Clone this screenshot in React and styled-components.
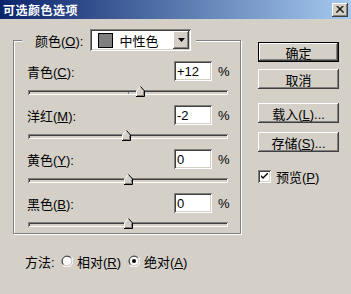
import React from 'react';
import styled, { createGlobalStyle, css } from 'styled-components';

const face = '#d4d0c8';
const shadow = '#808080';
const dark = '#404040';

const sunken = css`
  box-shadow: inset 1px 1px ${shadow}, inset -1px -1px #fff, inset 2px 2px ${dark},
    inset -2px -2px ${face};
`;

const raised = css`
  box-shadow: inset -1px -1px ${dark}, inset 1px 1px #fff, inset -2px -2px ${shadow},
    inset 2px 2px ${face};
`;

const GlobalStyle = createGlobalStyle`
  html, body {
    margin: 0;
    padding: 0;
    background: ${face};
  }
`;

const Window = styled.div`
  width: 351px;
  height: 294px;
  background: ${face};
  font-family: 'Liberation Sans', 'Noto Sans CJK SC', sans-serif;
  font-size: 12px;
  color: #000;
  overflow: hidden;
`;

const TitleBar = styled.div`
  height: 19px;
  display: flex;
  align-items: center;
  justify-content: space-between;
  padding: 0 3px 0 3px;
  background: linear-gradient(to right, #0a246a, #a6caf0);
`;

const Title = styled.span`
  color: #fff;
  font-weight: bold;
  font-size: 12px;
  letter-spacing: 0.5px;
`;

const CloseButton = styled.div`
  width: 16px;
  height: 14px;
  background: ${face};
  display: flex;
  align-items: center;
  justify-content: center;
  ${raised};
`;

const Body = styled.div`
  display: flex;
`;

const LeftColumn = styled.div`
  margin-left: 13px;
  width: 229px;
  display: flex;
  flex-direction: column;
`;

const Group = styled.fieldset`
  margin: 10px 0 0 0;
  width: 228px;
  box-sizing: border-box;
  padding: 10px 12px 4px 13px;
  border: 1px solid ${shadow};
  box-shadow: inset 1px 1px #fff, 1px 1px #fff;
`;

const Legend = styled.legend`
  display: flex;
  align-items: center;
  margin-left: -5px;
  padding: 0 5px 0 13px;
  height: 22px;
  background: ${face};
  gap: 7px;
`;

const Text = styled.span`
  font-size: 13px;
  white-space: nowrap;
`;

const Combo = styled.div`
  width: 101px;
  height: 22px;
  box-sizing: border-box;
  background: #fff;
  display: flex;
  align-items: center;
  padding: 2px 2px 2px 8px;
  ${sunken};
`;

const Swatch = styled.div`
  width: 15px;
  height: 15px;
  box-sizing: border-box;
  background: ${({ color }) => color};
  border: 1px solid #000;
`;

const ComboText = styled.span`
  flex: 1;
  margin-left: 6px;
  font-size: 13px;
`;

const ArrowButton = styled.div`
  width: 16px;
  height: 18px;
  background: ${face};
  display: flex;
  align-items: center;
  justify-content: center;
  ${raised};
`;

const Row = styled.div`
  display: flex;
  flex-direction: column;
  margin-bottom: 8px;
  &:last-child {
    margin-bottom: 0;
  }
`;

const FieldLine = styled.div`
  display: flex;
  align-items: center;
  height: 20px;
`;

const Label = styled.span`
  flex: 1;
  font-size: 13px;
`;

const NumberBox = styled.div`
  width: 38px;
  height: 20px;
  box-sizing: border-box;
  background: #fff;
  padding: 3px 3px 0 3px;
  font-size: 13px;
  line-height: 15px;
  ${sunken};
`;

const Percent = styled.span`
  margin-left: 6px;
  width: 10px;
  font-size: 13px;
`;

const SliderArea = styled.div`
  position: relative;
  margin: 5px 0 0 1px;
  width: 200px;
  height: 11px;
`;

const Track = styled.div`
  position: relative;
  top: 4px;
  height: 5px;
  background: ${face};
  ${sunken};
`;

const CenterMark = styled.div`
  position: absolute;
  left: 100px;
  top: 2px;
  width: 1px;
  height: 2px;
  background: ${shadow};
`;

const Thumb = styled.svg`
  position: absolute;
  top: 0;
  margin-left: -4px;
`;

const MethodLine = styled.div`
  display: flex;
  align-items: center;
  height: 16px;
  margin: 19px 0 0 12px;
`;

const MethodLabel = styled.span`
  width: 36px;
  font-size: 13px;
`;

const Option = styled.label`
  display: flex;
  align-items: center;
  gap: 4px;
  width: ${({ w }) => w}px;
`;

const RightColumn = styled.div`
  margin-left: 16px;
  padding-top: 23px;
  width: 81px;
  display: flex;
  flex-direction: column;
`;

const Button = styled.div`
  height: 20px;
  box-sizing: border-box;
  display: flex;
  align-items: center;
  justify-content: center;
  background: ${face};
  margin-top: ${({ gap }) => gap || 0}px;
  ${({ primary }) =>
    primary
      ? css`
          border: 1px solid #000;
          box-shadow: inset -1px -1px ${dark}, inset 1px 1px #fff, inset -2px -2px ${shadow};
        `
      : raised};
`;

const CheckLine = styled.label`
  display: flex;
  align-items: center;
  gap: 5px;
  margin-top: 15px;
`;

const CheckBox = styled.div`
  width: 13px;
  height: 13px;
  box-sizing: border-box;
  background: #fff;
  display: flex;
  align-items: center;
  justify-content: center;
  ${sunken};
`;

const rows = [
  { label: '青色', key: 'C', value: 12, text: '+12' },
  { label: '洋红', key: 'M', value: -2, text: '-2' },
  { label: '黄色', key: 'Y', value: 0, text: '0' },
  { label: '黑色', key: 'B', value: 0, text: '0' },
];

const Radio = ({ checked }) => (
  <svg width="12" height="12" viewBox="0 0 12 12">
    <path d="M10.5 2.5 A6 6 0 0 0 1.5 9.5" stroke={shadow} fill="none" />
    <path d="M9.5 2.5 A4.8 4.8 0 0 0 2.5 9.5" stroke={dark} fill="none" />
    <circle cx="6" cy="6" r="4" fill="#fff" />
    <path d="M1.5 10 A6 6 0 0 0 10.5 1.8" stroke="#fff" fill="none" />
    {checked && <circle cx="6" cy="6" r="2" fill="#000" />}
  </svg>
);

const SliderThumb = ({ value }) => (
  <Thumb width="9" height="11" viewBox="0 0 9 11" style={{ left: 100 + value }}>
    <polygon points="0.5,5 4.5,0.5 8.5,5 8.5,10.5 0.5,10.5" fill={face} />
    <polyline points="0.5,10 0.5,5 4.5,0.5" stroke="#fff" fill="none" />
    <polyline points="4.5,0.5 8.5,5 8.5,10.5 0,10.5" stroke="#000" fill="none" />
    <polyline points="7.5,5.5 7.5,9.5 1,9.5" stroke={shadow} fill="none" />
  </Thumb>
);

export default function App() {
  return (
    <Window>
      <GlobalStyle />
      <TitleBar>
        <Title>可选颜色选项</Title>
        <CloseButton>
          <svg width="8" height="7" viewBox="0 0 8 7">
            <path d="M0.5 0 L7.5 7 M1.5 0 L8 6.5 M7.5 0 L0.5 7 M6.5 0 L0 6.5" stroke="#000" strokeWidth="1" />
          </svg>
        </CloseButton>
      </TitleBar>
      <Body>
        <LeftColumn>
          <Group>
            <Legend>
              <Text>
                颜色(<u>O</u>):
              </Text>
              <Combo>
                <Swatch color="#7f7f7f" />
                <ComboText>中性色</ComboText>
                <ArrowButton>
                  <svg width="7" height="4" viewBox="0 0 7 4">
                    <polygon points="0,0 7,0 3.5,4" fill="#000" />
                  </svg>
                </ArrowButton>
              </Combo>
            </Legend>
            {rows.map((r) => (
              <Row key={r.key}>
                <FieldLine>
                  <Label>
                    {r.label}(<u>{r.key}</u>):
                  </Label>
                  <NumberBox>{r.text}</NumberBox>
                  <Percent>%</Percent>
                </FieldLine>
                <SliderArea>
                  <Track>
                    <CenterMark />
                  </Track>
                  <SliderThumb value={r.value} />
                </SliderArea>
              </Row>
            ))}
          </Group>
          <MethodLine>
            <MethodLabel>方法:</MethodLabel>
            <Option w={67}>
              <Radio />
              <Text>
                相对(<u>R</u>)
              </Text>
            </Option>
            <Option w={80}>
              <Radio checked />
              <Text>
                绝对(<u>A</u>)
              </Text>
            </Option>
          </MethodLine>
        </LeftColumn>
        <RightColumn>
          <Button primary>
            <Text>确定</Text>
          </Button>
          <Button gap={7}>
            <Text>取消</Text>
          </Button>
          <Button gap={14}>
            <Text>
              载入(<u>L</u>)...
            </Text>
          </Button>
          <Button gap={9}>
            <Text>
              存储(<u>S</u>)...
            </Text>
          </Button>
          <CheckLine>
            <CheckBox>
              <svg width="7" height="7" viewBox="0 0 7 7">
                <path d="M0 2 L0 4 L2 6 L7 1 L7 -1 L2 4 Z" fill="#000" />
              </svg>
            </CheckBox>
            <Text>
              预览(<u>P</u>)
            </Text>
          </CheckLine>
        </RightColumn>
      </Body>
    </Window>
  );
}
